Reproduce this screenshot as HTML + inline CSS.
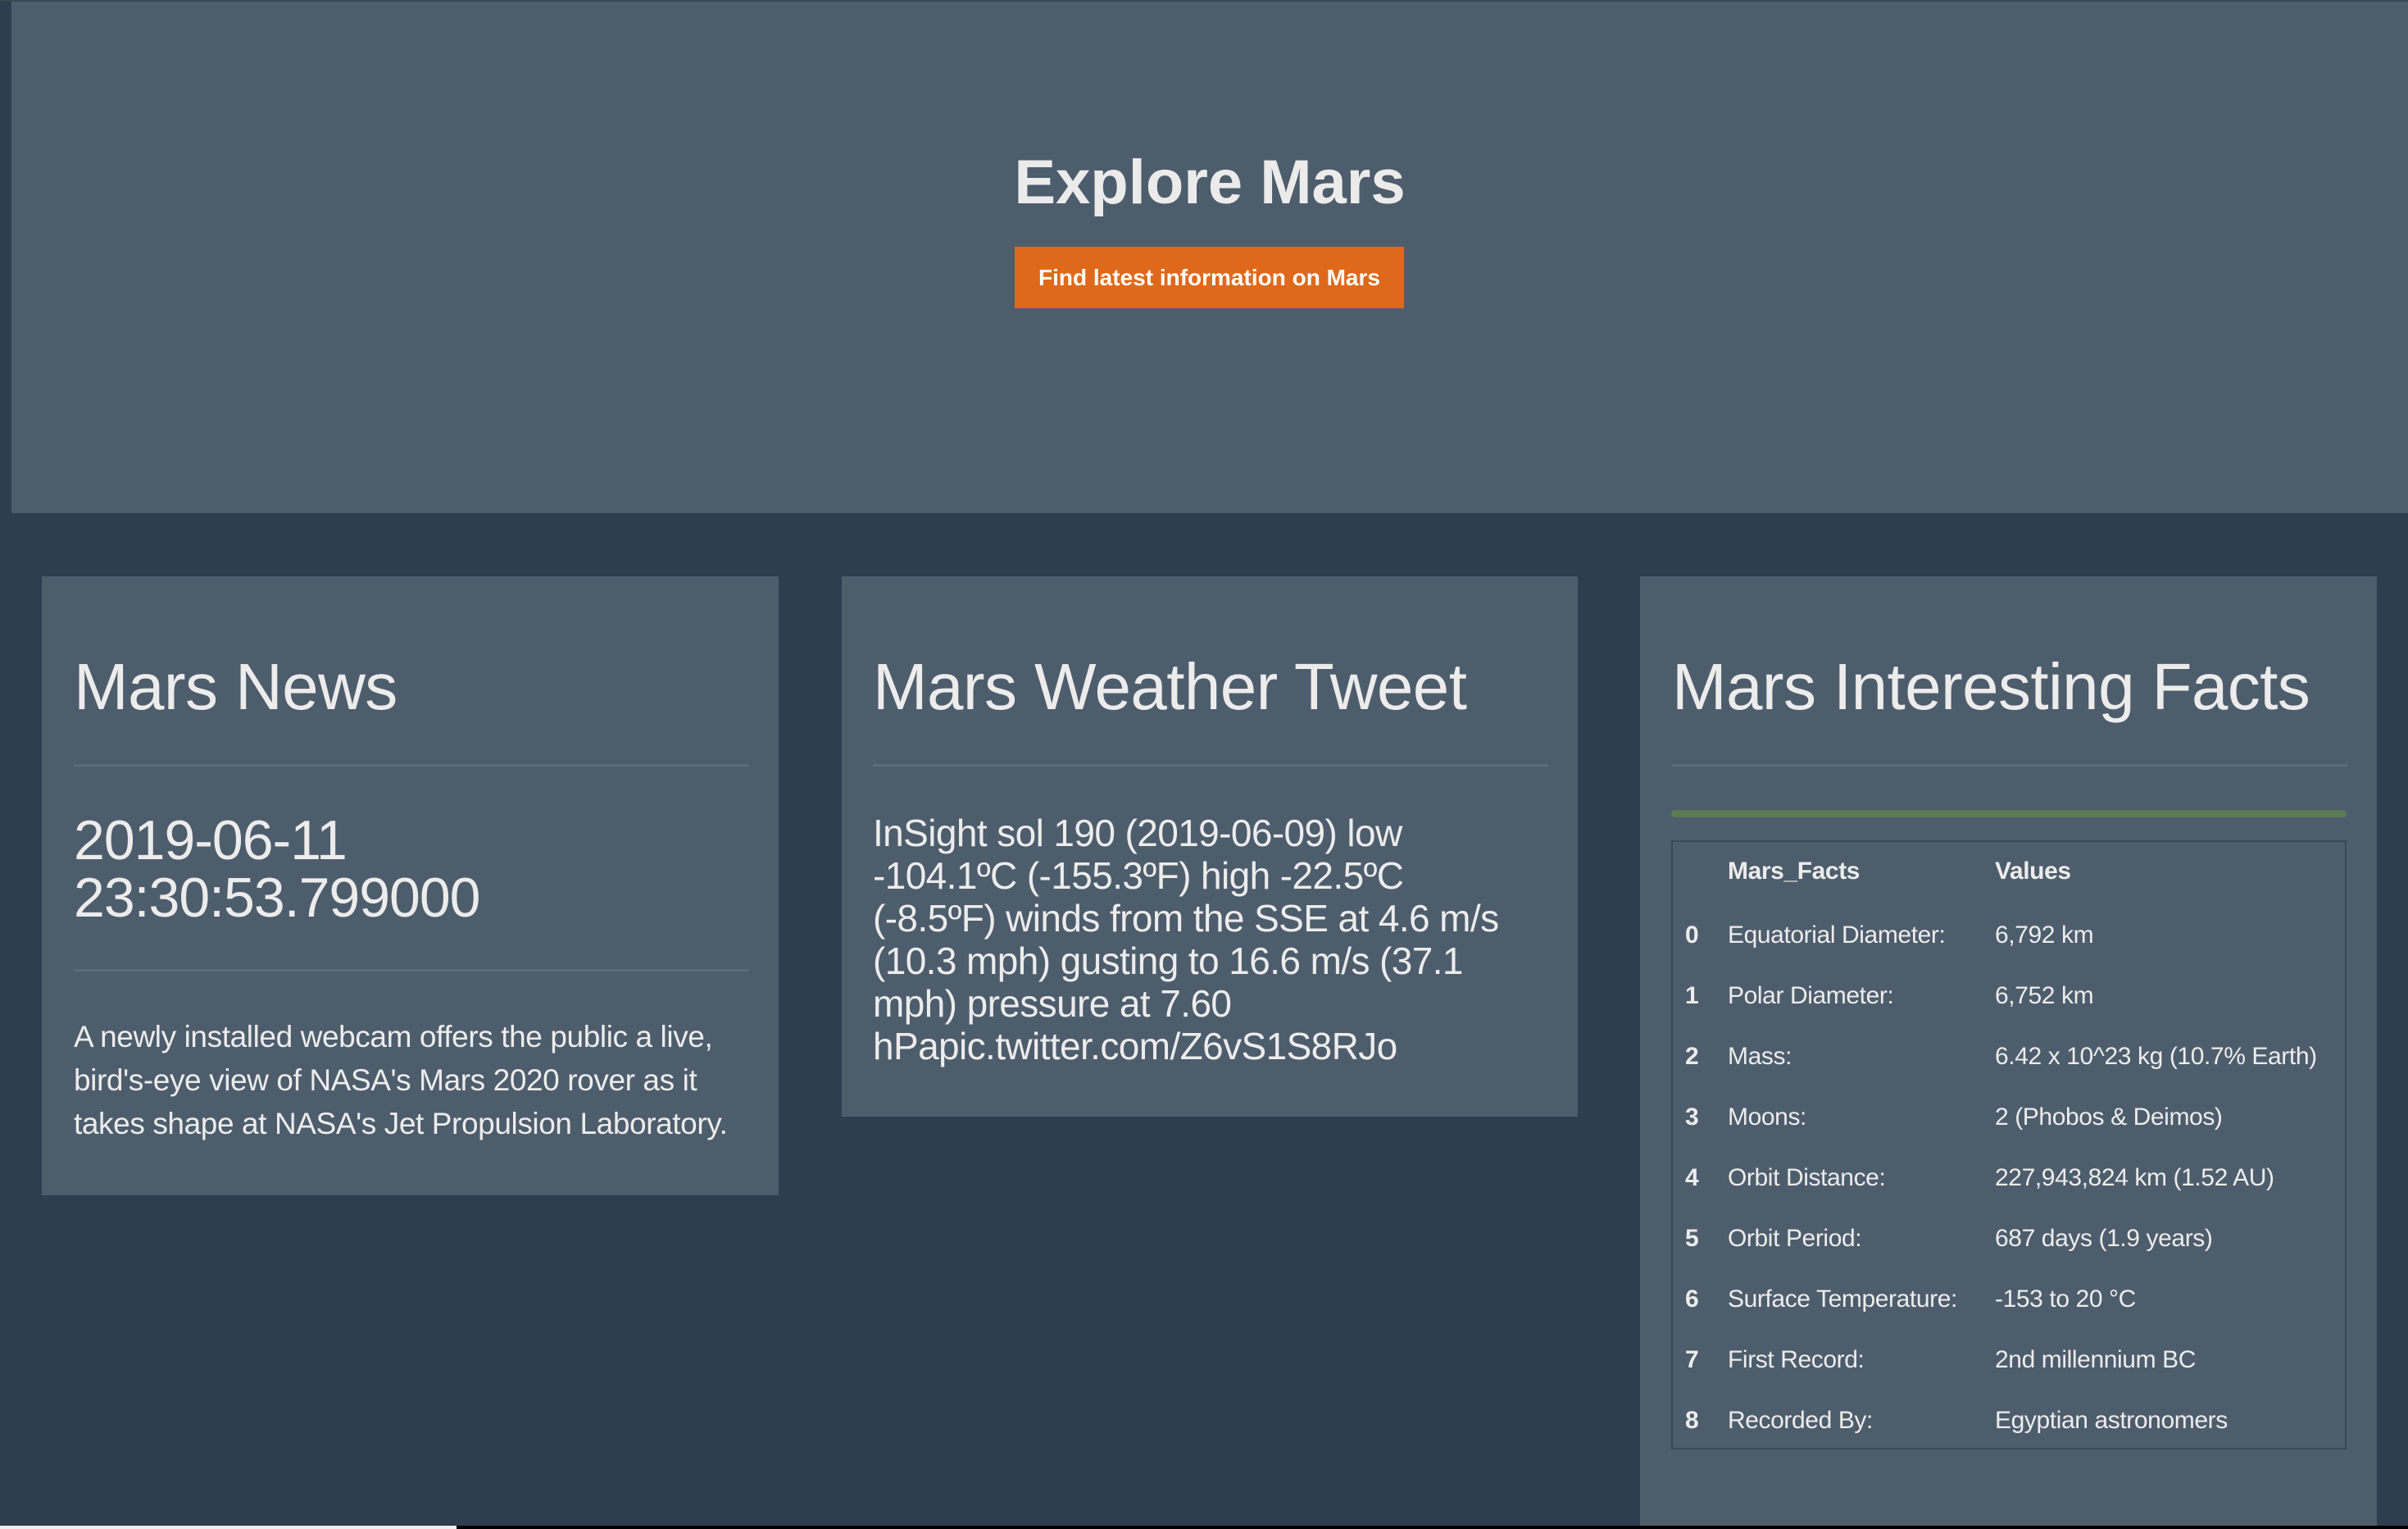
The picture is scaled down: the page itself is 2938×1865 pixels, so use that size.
<!DOCTYPE html>
<html><head><meta charset="utf-8"><style>
*{margin:0;padding:0;box-sizing:border-box}
html,body{width:2938px;height:1865px;overflow:hidden;background:#2c3e50;font-family:"Liberation Sans",sans-serif;color:#ececec}
.abs{position:absolute}
.hero{left:14px;top:2px;width:2924px;height:624px;background:#4e5d6c}
.topline{left:0;top:0;width:2938px;height:2px;background:#3a4654}
.card{background:#4e5d6c}
.h{position:absolute;font-size:80px;line-height:1;white-space:nowrap;letter-spacing:-0.6px}
.hr{position:absolute;height:3px;background:#5d6b79}
.ln{position:absolute;white-space:nowrap}
</style></head><body>
<div class="abs topline"></div>
<div class="abs hero"></div>
<div class="abs" style="left:0;width:2938px;top:178px;text-align:center;font-weight:bold;font-size:76px;line-height:90px;color:#ebebeb;padding-left:14px">Explore Mars</div>
<div class="abs" style="left:1238px;top:301px;width:475px;height:75px;background:#df691a;color:#fff;font-weight:bold;font-size:28px;line-height:75px;text-align:center">Find latest information on Mars</div>

<div class="abs card" style="left:51px;top:703px;width:899px;height:755px"></div>
<div class="abs card" style="left:1027px;top:703px;width:898px;height:659px"></div>
<div class="abs card" style="left:2001px;top:703px;width:899px;height:1162px"></div>

<div class="h" style="left:90px;top:798px">Mars News</div>
<div class="hr" style="left:90px;top:932px;width:824px"></div>
<div class="ln" style="left:90px;top:990px;font-size:68px;line-height:70px;letter-spacing:-1px">2019-06-11<br>23:30:53.799000</div>
<div class="hr" style="left:90px;top:1182px;width:824px"></div>
<div class="ln" style="left:90px;top:1238px;font-size:37px;line-height:53px;letter-spacing:-0.4px">A newly installed webcam offers the public a live,<br>bird's-eye view of NASA's Mars 2020 rover as it<br>takes shape at NASA's Jet Propulsion Laboratory.</div>

<div class="h" style="left:1065px;top:798px">Mars Weather Tweet</div>
<div class="hr" style="left:1065px;top:932px;width:824px"></div>
<div class="ln" style="left:1065px;top:990px;font-size:46px;line-height:52px;letter-spacing:-0.6px">InSight sol 190 (2019-06-09) low<br>-104.1ºC (-155.3ºF) high -22.5ºC<br>(-8.5ºF) winds from the SSE at 4.6 m/s<br>(10.3 mph) gusting to 16.6 m/s (37.1<br>mph) pressure at 7.60<br>hPapic.twitter.com/Z6vS1S8RJo</div>

<div class="h" style="left:2040px;top:798px">Mars Interesting Facts</div>
<div class="hr" style="left:2040px;top:932px;width:824px"></div>
<div class="abs" style="left:2039px;top:988px;width:824px;height:9px;background:#5b7b54;border-radius:5px"></div>
<div class="abs" style="left:2039px;top:1025px;width:824px;height:743px;border:2px solid #3a4756"></div>
<div class="abs" style="left:2039px;top:1025px;width:824px;font-size:30px;letter-spacing:-0.4px">
<div style="position:absolute;top:21px;left:69px;font-weight:bold;white-space:nowrap">Mars_Facts</div>
<div style="position:absolute;top:21px;left:395px;font-weight:bold">Values</div>
</div>
<div class="abs" style="left:2039px;top:1104px;width:824px;font-size:30px;line-height:74px;letter-spacing:-0.4px;white-space:nowrap">
<div style="position:absolute;left:17px;font-weight:bold">0<br>1<br>2<br>3<br>4<br>5<br>6<br>7<br>8</div>
<div style="position:absolute;left:69px">Equatorial Diameter:<br>Polar Diameter:<br>Mass:<br>Moons:<br>Orbit Distance:<br>Orbit Period:<br>Surface Temperature:<br>First Record:<br>Recorded By:</div>
<div style="position:absolute;left:395px">6,792 km<br>6,752 km<br>6.42 x 10^23 kg (10.7% Earth)<br>2 (Phobos &amp; Deimos)<br>227,943,824 km (1.52 AU)<br>687 days (1.9 years)<br>-153 to 20 °C<br>2nd millennium BC<br>Egyptian astronomers</div>
</div>

<div class="abs" style="left:0;top:1861px;width:557px;height:4px;background:#eeeeee"></div>
<div class="abs" style="left:557px;top:1861px;width:2381px;height:4px;background:#000"></div>
</body></html>
